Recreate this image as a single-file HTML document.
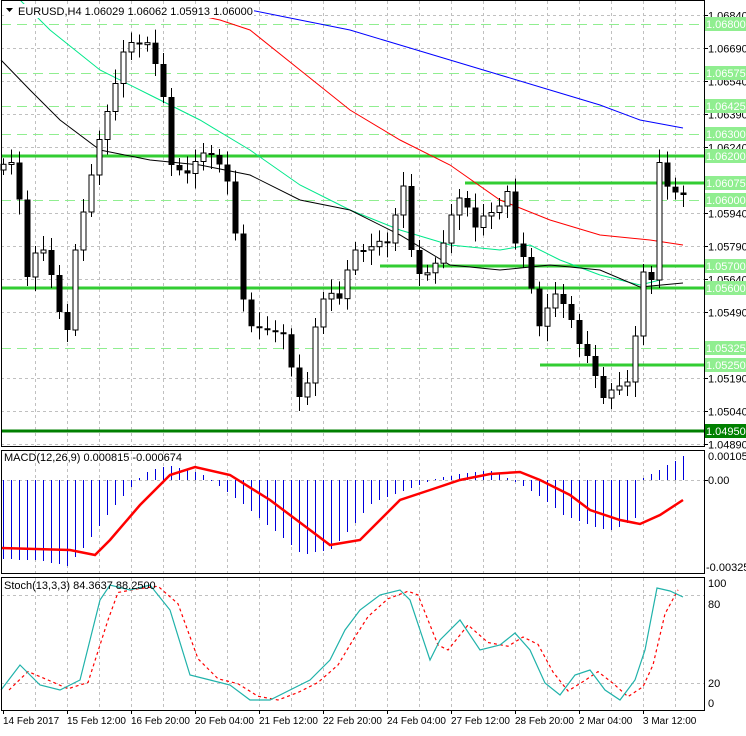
<!DOCTYPE html>
<html><head><meta charset="utf-8">
<style>
html,body{margin:0;padding:0;background:#fff;}
body{width:746px;height:731px;overflow:hidden;font-family:"Liberation Sans",Tahoma,sans-serif;}
svg text{font-family:"Liberation Sans",sans-serif;font-size:11px;}
svg text.d{font-size:10px;}
</style></head><body>
<svg id="c" width="746" height="731" xmlns="http://www.w3.org/2000/svg"></svg>
<script>
(function(){
var s='';
function L(x1,y1,x2,y2,c,w,d){s+='<line x1="'+x1+'" y1="'+y1+'" x2="'+x2+'" y2="'+y2+'" stroke="'+c+'" stroke-width="'+(w||1)+'"'+(d?' stroke-dasharray="'+d+'"':'')+'/>';}
function T(x,y,t,c,cl){s+='<text x="'+x+'" y="'+y+'" fill="'+(c||'#000')+'"'+(cl?' class="'+cl+'"':'')+'>'+t+'</text>';}
function interp(pts,x){for(var i=0;i<pts.length-1;i++){if(x>=pts[i][0]&&x<=pts[i+1][0]){var t=(x-pts[i][0])/(pts[i+1][0]-pts[i][0]);return pts[i][1]+t*(pts[i+1][1]-pts[i][1]);}}return x<pts[0][0]?pts[0][1]:pts[pts.length-1][1];}
function PL(pts,c,w,d){s+='<polyline fill="none" points="'+pts.map(function(p){return p[0]+','+p[1]}).join(' ')+'" stroke="'+c+'" stroke-width="'+(w||1)+'"'+(d?' stroke-dasharray="'+d+'"':'')+'/>';}
var R=704;
for(var x=35;x<R;x+=32){L(x+.5,1,x+.5,446,'#c0c0c0',1,'3,3');L(x+.5,451,x+.5,573,'#c0c0c0',1,'3,3');L(x+.5,578,x+.5,710,'#c0c0c0',1,'3,3');}
function py(p){return 15+(1.0684-p)*22000;}
var ax=[1.0684,1.0669,1.0654,1.0639,1.0624,1.0594,1.0579,1.0564,1.0549,1.0519,1.0504,1.0489];
ax.forEach(function(p){var y=Math.round(py(p))+.5;L(1,y,R,y,'#c0c0c0',1,'3,3');L(R,y,R+4,y,'#000');T(708,y+4,p.toFixed(5));});
[1.068,1.06575,1.06425,1.063,1.06,1.05325].forEach(function(p){var y=Math.round(py(p))+.5;L(1,y,R,y,'#90ee90',1,'10,6');});
[[1.062,1],[1.06075,465],[1.057,380],[1.056,1],[1.0525,540]].forEach(function(a){var y=Math.round(py(a[0]));L(a[1],y,R,y,'#32cd32',3);});
L(1,431,R,431,'#008000',3);
PL([[200,5],[250,10],[300,20],[350,30],[400,45],[450,60],[500,75],[550,90],[600,105],[640,120],[683,128]],'#0000ff',1);
PL([[150,5],[220,20],[250,30],[300,70],[350,110],[400,140],[450,165],[500,200],[550,220],[600,235],[650,240],[683,245]],'#ff0000',1);
PL([[20,0],[50,30],[100,70],[150,95],[200,120],[250,150],[300,185],[350,210],[400,230],[450,245],[500,250],[530,245],[560,260],[600,275],[640,285],[660,280]],'#00e88a',1);
PL([[1,60],[30,90],[60,120],[100,150],[150,160],[200,165],[250,175],[300,200],[350,210],[400,235],[450,265],[500,270],[550,265],[600,270],[640,287],[683,283]],'#000',1);
var k=[[3,170],[10,160],[20,165],[30,280],[40,250],[50,250],[60,300],[70,340],[80,240],[90,200],[100,150],[110,115],[120,80],[130,40],[140,45],[150,40],[165,80],[175,165],[190,175],[200,160],[210,150],[220,160],[230,175],[240,240],[250,325],[270,330],[290,335],[300,400],[310,390],[320,320],[330,290],[345,300],[355,250],[370,250],[385,240],[395,245],[405,170],[415,250],[425,280],[440,262],[450,235],[460,195],[470,205],[480,230],[490,210],[500,215],[510,185],[520,250],[530,260],[537,300],[545,335],[555,290],[565,300],[575,320],[585,350],[595,360],[605,400],[615,390],[625,385],[635,380],[645,270],[655,280],[661,155],[669,185],[675,190],[683,195]];
var prev=interp(k,3);
for(var i=0;i<86;i++){var cx=3+8*i;var c=interp(k,cx+4);var o=prev;var tp=Math.min(o,c),bt=Math.max(o,c);if(bt-tp<2){bt=tp+2;}
var hi=tp-6-((i*7)%9),lo=bt+5+((i*5)%11);L(cx+.5,hi,cx+.5,lo,'#000',1);
if(c<o){s+='<rect x="'+(cx-2)+'" y="'+tp+'" width="5" height="'+(bt-tp)+'" fill="#fff" stroke="#000" stroke-width="1"/>';}
else{s+='<rect x="'+(cx-2.5)+'" y="'+tp+'" width="6" height="'+(bt-tp)+'" fill="#000"/>';}
prev=c;}
[[1.068,'#90ee90'],[1.06575,'#90ee90'],[1.06425,'#90ee90'],[1.063,'#90ee90'],[1.062,'#90ee90'],[1.06075,'#90ee90'],[1.06,'#90ee90'],[1.057,'#90ee90'],[1.056,'#90ee90'],[1.05325,'#90ee90'],[1.0525,'#90ee90'],[1.0495,'#008000']].forEach(function(a){var y=Math.round(py(a[0]));s+='<rect x="705" y="'+(y-7)+'" width="41" height="14" fill="'+a[1]+'"/>';T(706,y+4,a[0].toFixed(5),'#fff');});
s+='<rect x="4" y="4" width="250" height="14" fill="#fff"/>';
s+='<polygon points="6,8 13,8 9.5,12" fill="#000"/>';
T(18,15,'EURUSD,H4  1.06029 1.06062 1.05913 1.06000');
var sig=[[1,548],[70,550],[95,555],[110,540],[140,505],[170,475],[195,467],[230,475],[270,500],[310,530],[330,545],[360,540],[380,520],[400,500],[430,490],[460,480],[490,474],[520,472],[540,480],[570,495],[590,510],[620,520],[640,524],[660,515],[683,500]];
L(1,480.5,R,480.5,'#c0c0c0',1,'3,3');
for(var x2=3;x2<=683;x2+=8){var v=480+(interp(sig,x2+28)-480)*1.15;if(x2>640)v=480-(x2-640)*0.55;L(x2+.5,480,x2+.5,Math.round(v),'#0000dd',1);}
PL(sig,'#ff0000',2.5);
T(4,461,'MACD(12,26,9) 0.000815 -0.000674');
T(708,484,'0.00');T(708,460,'0.00105');T(706,571,'-0.003259');
L(R,480.5,R+4,480.5,'#000');
L(1,595.5,R,595.5,'#c0c0c0',1,'3,3');L(1,683.5,R,683.5,'#c0c0c0',1,'3,3');
var st=[[1,690],[20,665],[40,685],[60,690],[80,680],[100,600],[110,585],[130,590],[150,585],[170,610],[190,675],[210,680],[230,685],[250,700],[270,700],[290,690],[310,680],[330,660],[345,630],[360,610],[380,595],[400,590],[410,600],[430,660],[440,640],[460,620],[480,650],[500,645],[515,633],[530,650],[545,683],[560,695],[575,675],[590,670],[605,690],[620,700],[635,680],[645,650],[657,588],[670,591],[683,597]];
var sd=st.map(function(p){return [p[0]+8,interp(st,p[0]-2)*0.5+interp(st,p[0]-8)*0.5];}).filter(function(p){return p[0]<=683;});
PL(sd,'#ff0000',1.2,'3,3');
PL(st,'#20b2aa',1.2);
T(4,589,'Stoch(13,3,3) 84.3637 88.2500');
T(708,587,'100');T(708,608,'80');T(708,687,'20');T(708,707,'0');
s+='<rect x="1.5" y="0.5" width="'+(R-1)+'" height="446" fill="none" stroke="#000"/>';
s+='<rect x="1.5" y="450.5" width="'+(R-1)+'" height="123" fill="none" stroke="#000"/>';
s+='<rect x="1.5" y="577.5" width="'+(R-1)+'" height="133" fill="none" stroke="#000"/>';
var d=['14 Feb 2017','15 Feb 12:00','16 Feb 20:00','20 Feb 04:00','21 Feb 12:00','22 Feb 20:00','24 Feb 04:00','27 Feb 12:00','28 Feb 20:00','2 Mar 04:00','3 Mar 12:00'];
d.forEach(function(t,i){var x=3+64*i;L(x+.5,710,x+.5,714,'#000');T(x,724,t,'#000','d');});
document.getElementById('c').innerHTML=s;
})();
</script>
</body></html>
